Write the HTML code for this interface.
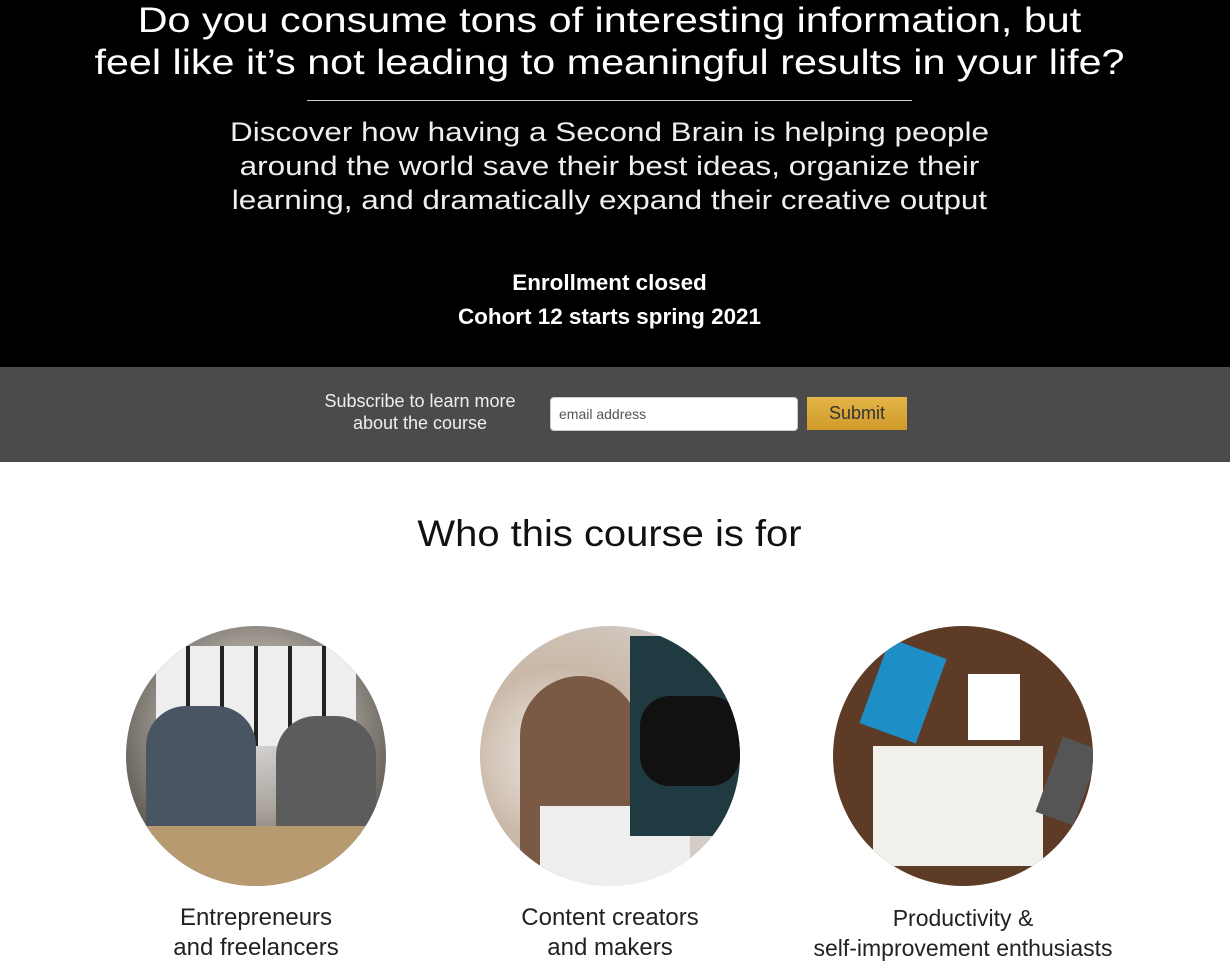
<!DOCTYPE html>
<html><head><style>
body{margin:0;width:1230px;height:964px;overflow:hidden;font-family:"Liberation Sans",sans-serif;background:#fff}
.hero{position:absolute;left:0;top:0;width:1230px;height:367px;background:#000;color:#fff;text-align:center}
.t{position:absolute;left:0;width:1219px;text-align:center;white-space:nowrap}
.bar{position:absolute;left:0;top:367px;width:1230px;height:95px;background:#4b4b4b}
.c{position:absolute;top:626px;width:260px;height:260px;border-radius:50%;overflow:hidden}
</style></head><body>
<div class="hero">
<div class="t" style="top:0px;font-size:35px;line-height:42px;transform:scaleX(1.18)">Do you consume tons of interesting information, but<br>feel like it’s not leading to meaningful results in your life?</div>
<div style="position:absolute;left:307px;top:100px;width:605px;height:1px;background:#ccc"></div>
<div class="t" style="top:115px;font-size:27px;line-height:34px;font-weight:300;color:#eee;transform:scaleX(1.165)">Discover how having a Second Brain is helping people<br>around the world save their best ideas, organize their<br>learning, and dramatically expand their creative output</div>
<div class="t" style="top:266px;font-size:22px;line-height:34px;font-weight:bold;transform:scaleX(1.02)">Enrollment closed<br>Cohort 12 starts spring 2021</div>
</div>
<div class="bar">
<div style="position:absolute;left:310px;top:23px;width:220px;text-align:center;color:#eee;font-size:18px;line-height:22px">Subscribe to learn more<br>about the course</div>
<div style="position:absolute;left:550px;top:30px;width:248px;height:34px;background:#fff;border-radius:4px;border:1px solid #ccc;box-sizing:border-box;font-size:14px;color:#555;line-height:32px;padding-left:8px">email address</div>
<div style="position:absolute;left:807px;top:30px;width:100px;height:33px;background:linear-gradient(#e4b548,#cf9a2a);color:#333;font-size:18px;line-height:33px;text-align:center">Submit</div>
</div>
<div class="t" style="top:511px;font-size:37px;line-height:46px;color:#111;transform:scaleX(1.08)">Who this course is for</div>
<div class="c" style="left:126px;background:radial-gradient(circle at 50% 40%,#ddd 0,#a9a39b 40%,#5a5550 75%,#8a7a66 100%)">
<div style="position:absolute;left:30px;top:20px;width:200px;height:100px;background:repeating-linear-gradient(90deg,#eee 0 30px,#222 30px 34px)"></div>
<div style="position:absolute;left:20px;top:80px;width:110px;height:130px;background:#4a5563;border-radius:40px 40px 0 0"></div>
<div style="position:absolute;left:150px;top:90px;width:100px;height:120px;background:#5c5c5c;border-radius:40px 40px 0 0"></div>
<div style="position:absolute;left:0;top:200px;width:260px;height:60px;background:#b89a70"></div>
</div>
<div class="c" style="left:480px;background:radial-gradient(circle at 30% 50%,#f0ece8 0,#c9b8a8 40%,#ddd 100%)">
<div style="position:absolute;left:40px;top:50px;width:120px;height:200px;background:#7a5a44;border-radius:60px 60px 20px 20px"></div>
<div style="position:absolute;left:60px;top:180px;width:150px;height:90px;background:#eee"></div>
<div style="position:absolute;left:150px;top:10px;width:110px;height:200px;background:#1f3a40"></div>
<div style="position:absolute;left:160px;top:70px;width:100px;height:90px;background:#111;border-radius:30px"></div>
</div>
<div class="c" style="left:833px;background:#5e3b26">
<div style="position:absolute;left:40px;top:120px;width:170px;height:120px;background:#f2f0ea"></div>
<div style="position:absolute;left:40px;top:20px;width:60px;height:90px;background:#1e8ec6;transform:rotate(20deg)"></div>
<div style="position:absolute;left:135px;top:48px;width:52px;height:66px;background:#fff"></div>
<div style="position:absolute;left:215px;top:115px;width:40px;height:80px;background:#555;transform:rotate(20deg)"></div>
</div>
<div style="position:absolute;left:106px;top:903px;width:300px;text-align:center;font-size:24px;line-height:30px;color:#222">Entrepreneurs<br>and freelancers</div>
<div style="position:absolute;left:460px;top:903px;width:300px;text-align:center;font-size:24px;line-height:30px;color:#222">Content creators<br>and makers</div>
<div style="position:absolute;left:780px;top:903px;width:366px;text-align:center;font-size:23px;line-height:30px;color:#222;white-space:nowrap">Productivity &amp;<br>self-improvement enthusiasts</div>
</body></html>
